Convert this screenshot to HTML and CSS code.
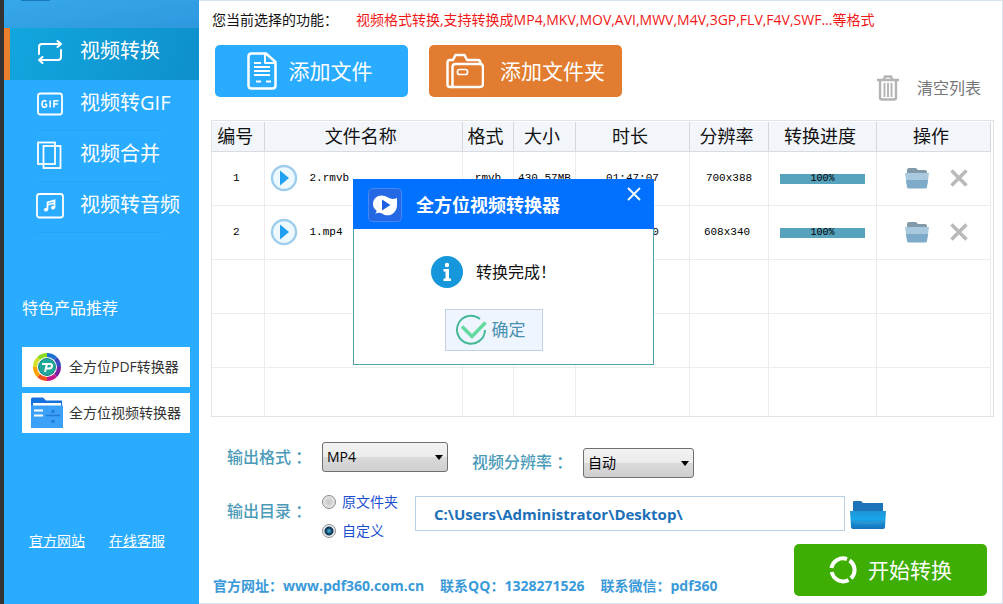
FILE: index.html
```html
<!DOCTYPE html>
<html lang="zh-CN">
<head>
<meta charset="utf-8">
<title>全方位视频转换器</title>
<link rel="stylesheet" href="styles.css">
</head>
<body>
<div class="app">
  <aside class="sidebar">
    <div class="brand"><span class="brand-tab"></span></div>
    <nav class="nav">
      <a class="nav-item active" href="#">
        <svg class="nav-icon" viewBox="0 0 28 28" fill="none" stroke="currentColor" stroke-width="2" stroke-linecap="round" stroke-linejoin="round"><path d="M3 16V9q0-3 3-3h18M21.500 3l3.500 3-3.500 3M25 12v7q0 3-3 3H4M6.500 19L3 22l3.500 3"/></svg>
        <span>视频转换</span></a>
      <a class="nav-item" href="#">
        <svg class="nav-icon" viewBox="0 0 28 28" fill="none" stroke="currentColor" stroke-width="1.800" stroke-linejoin="round"><rect x="2" y="3.500" width="24" height="21" rx="2.500"/><g stroke-width="1.600"><path d="M10.500 11.500q-1.200-1-2.500-.8-2 .4-2 3.300t2 3.300q1.500.2 2.500-.8V14.200H8.700M14.200 10.500v7M18 17.500v-6.800h4.500M18 14h4"/></g></svg>
        <span>视频转GIF</span></a>
      <a class="nav-item" href="#">
        <svg class="nav-icon" viewBox="0 0 28 28" fill="none" stroke="currentColor" stroke-width="1.800"><rect x="2" y="1.500" width="17" height="21.500"/><rect x="7.500" y="5" width="17" height="22"/></svg>
        <span>视频合并</span></a>
      <a class="nav-item" href="#">
        <svg class="nav-icon" viewBox="0 0 28 28" fill="none" stroke="currentColor" stroke-width="1.800"><rect x="1" y="2" width="26" height="23.500" rx="2.500"/><path d="M11.500 17.500v-7l7-2v7M11.500 13l7-2"/><ellipse cx="10" cy="17.700" rx="1.700" ry="1.400" fill="currentColor" stroke-width="1"/><ellipse cx="17" cy="15.700" rx="1.700" ry="1.400" fill="currentColor" stroke-width="1"/></svg>
        <span>视频转音频</span></a>
    </nav>
    <section class="promo">
      <h2>特色产品推荐</h2>
      <a class="promo-card" href="#">
        <svg viewBox="0 0 32 32" width="32" height="32" fill="none" stroke-width="4"><g><path stroke="#1b6fd0" d="M16 4a12 12 0 0 1 8.500 3.500"/><path stroke="#3949c0" d="M24.500 7.500A12 12 0 0 1 28 16"/><path stroke="#7b1fa2" d="M28 16a12 12 0 0 1-3.500 8.500"/><path stroke="#c2188b" d="M24.500 24.500A12 12 0 0 1 16 28"/><path stroke="#f4511e" d="M16 28a12 12 0 0 1-8.500-3.500"/><path stroke="#ffa000" d="M7.500 24.500A12 12 0 0 1 4 16"/><path stroke="#d4e02a" d="M4 16a12 12 0 0 1 3.500-8.500"/><path stroke="#8bdc20" d="M7.500 7.500A12 12 0 0 1 16 4"/></g><circle cx="16" cy="16" r="8.500" fill="#20a79b" stroke="#17857f" stroke-width="1"/><path stroke="#fff" stroke-width="2" d="M11 13h8q2.500 0 2 2.200t-3 2.200h-2M16 13l-2 8"/></svg>
        <span>全方位PDF转换器</span></a>
      <a class="promo-card" href="#">
        <svg viewBox="0 0 32 32" width="32" height="32"><path fill="#1672dc" d="M0 2q0-1.500 1.500-1.500H12l3 3h16V12H0z"/><path fill="#fff" d="M2 6h28v4H2z"/><path fill="#3aa0f8" d="M0 8.500h32V31H0z"/><path stroke="#fff" stroke-width="2" d="M3 13.500h9M3 18.500h9"/><path stroke="#247bd2" stroke-width="1.500" d="M15 18.500h14"/><path fill="#247bd2" d="M20.500 13h3v3h-3zM20.500 23h3v3h-3z"/></svg>
        <span>全方位视频转换器</span></a>
    </section>
    <div class="side-links"><a href="#">官方网站</a><a href="#">在线客服</a></div>
  </aside>

  <main class="main">
    <p class="notice"><span>您当前选择的功能<span class="mid">：</span></span><span class="notice-red">视频格式转换,支持转换成MP4,MKV,MOV,AVI,MWV,M4V,3GP,FLV,F4V,SWF...等格式</span></p>
    <div class="toolbar">
      <button class="btn blue" type="button">
        <svg viewBox="0 0 30 38" width="30" height="38" fill="none" stroke="currentColor" stroke-width="2.500" stroke-linejoin="round"><path d="M19 1.500H4.500q-3 0-3 3v29q0 3 3 3h21q3 0 3-3V10z"/><path stroke-width="1.900" d="M18 2v9h10M7 11h7M7 15h16M7 19h16M7 23h16M9 29.500h5M19 29.500h5"/></svg>
        <span>添加文件</span></button>
      <button class="btn orange" type="button">
        <svg viewBox="0 0 38 36" width="38" height="36" fill="none" stroke="currentColor" stroke-width="2.500" stroke-linejoin="round"><path d="M7 34H4q-2.500 0-2.500-2.500v-22Q1.500 7 4 7h3l2.500-5h9L21 7h11q2.500 0 2.500 4"/><path d="M6.500 34V14q0-3 3-3H34q3 0 3 3v17q0 3-3 3z"/><rect x="11.500" y="16.500" width="10" height="5" rx="2" stroke-width="1.700"/></svg>
        <span>添加文件夹</span></button>
      <button class="clear" type="button">
        <svg viewBox="0 0 22 26" width="22" height="26" fill="none" stroke="currentColor" stroke-width="2.400"><path d="M0 5h22M6.500 5l1.500-3.500h6L15.500 5M3 5.500v17q0 2 2 2h12q2 0 2-2v-17"/><path d="M7.500 8v14M11 8v14M14.500 8v14" stroke-width="1.900"/></svg>
        <span>清空列表</span></button>
    </div>

    <div class="table-box">
      <table class="files">
        <colgroup><col class="c-no"><col class="c-name"><col class="c-fmt"><col class="c-size"><col class="c-time"><col class="c-res"><col class="c-prog"><col class="c-op"></colgroup>
        <thead><tr><th>编号</th><th>文件名称</th><th>格式</th><th>大小</th><th>时长</th><th>分辨率</th><th>转换进度</th><th>操作</th></tr></thead>
        <tbody>
          <tr>
            <td>1</td>
            <td><div class="file"><svg viewBox="0 0 28 28" width="28" height="28"><circle cx="14" cy="14" r="12" fill="#eef8ff" stroke="#9ccdec" stroke-width="2.400"/><path fill="#20a0f0" d="M10 6.500l9 7.500-9 7.500z"/></svg><span>2.rmvb</span></div></td>
            <td>rmvb</td><td>430.57MB</td><td>01:47:07</td><td>700x388</td>
            <td><div class="bar">100%</div></td>
            <td><div class="ops"><button type="button" aria-label="打开文件夹"><svg viewBox="0 0 24 24" width="24" height="24"><path fill="#8299aa" d="M2 4q0-2 2-2h7l2 2h7q2 0 2 2v5H2z"/><path fill="#a8c9de" d="M0 7h24l-1.500 11h-21z"/><path fill="#7eabc9" d="M1 14h22l-1 7q0 1.500-2 1.500H4q-2 0-2-1.500z"/></svg></button><button type="button" aria-label="删除"><svg viewBox="0 0 20 20" width="20" height="20"><path stroke="#b9b9b9" stroke-width="3.500" d="M2.500 2.500l15 15M17.500 2.500l-15 15"/></svg></button></div></td>
          </tr>
          <tr>
            <td>2</td>
            <td><div class="file"><svg viewBox="0 0 28 28" width="28" height="28"><circle cx="14" cy="14" r="12" fill="#eef8ff" stroke="#9ccdec" stroke-width="2.400"/><path fill="#20a0f0" d="M10 6.500l9 7.500-9 7.500z"/></svg><span>1.mp4</span></div></td>
            <td>mp4</td><td>12.30MB</td><td>00:03:20</td><td class="shift">608x340</td>
            <td><div class="bar">100%</div></td>
            <td><div class="ops"><button type="button" aria-label="打开文件夹"><svg viewBox="0 0 24 24" width="24" height="24"><path fill="#8299aa" d="M2 4q0-2 2-2h7l2 2h7q2 0 2 2v5H2z"/><path fill="#a8c9de" d="M0 7h24l-1.500 11h-21z"/><path fill="#7eabc9" d="M1 14h22l-1 7q0 1.500-2 1.500H4q-2 0-2-1.500z"/></svg></button><button type="button" aria-label="删除"><svg viewBox="0 0 20 20" width="20" height="20"><path stroke="#b9b9b9" stroke-width="3.500" d="M2.500 2.500l15 15M17.500 2.500l-15 15"/></svg></button></div></td>
          </tr>
          <tr><td></td><td></td><td></td><td></td><td></td><td></td><td></td><td></td></tr>
          <tr><td></td><td></td><td></td><td></td><td></td><td></td><td></td><td></td></tr>
          <tr class="last"><td></td><td></td><td></td><td></td><td></td><td></td><td></td><td></td></tr>
        </tbody>
      </table>
    </div>

    <div class="row formats">
      <label class="label" for="fmt">输出格式 <span class="mid">：</span></label>
      <span class="select wide"><select id="fmt"><option>MP4</option></select></span>
      <label class="label second" for="res">视频分辨率 <span class="mid">：</span></label>
      <span class="select"><select id="res"><option>自动</option></select></span>
    </div>
    <div class="row output">
      <span class="label">输出目录 <span class="mid">：</span></span>
      <div class="radios">
        <label><input type="radio" name="dir">原文件夹</label>
        <label><input type="radio" name="dir" checked>自定义</label>
      </div>
      <input class="path" type="text" aria-label="输出目录" value="C:\Users\Administrator\Desktop\">
      <button class="browse" type="button" aria-label="浏览">
        <svg viewBox="0 0 36 30" width="36" height="30"><defs><linearGradient id="fold" x1="0" y1="0" x2="0" y2="1"><stop offset="0" stop-color="#1f93d6"/><stop offset=".45" stop-color="#18a6ea"/><stop offset="1" stop-color="#1570b8"/></linearGradient></defs><path fill="#1d74b8" d="M3 1.500L4 1h7l2 2h20v12H3z"/><path fill="url(#fold)" d="M0 11h36l-1 16q0 2-2 2H3q-2 0-2-2z"/><path fill="#3d94cf" d="M1 20q17 4 34 0l-.2 2q-17 4-33.600 0z" opacity=".7"/></svg></button>
    </div>
    <footer class="footer">
      <p><span>官方网址<span class="mid">：</span>www.pdf360.com.cn</span><span>联系QQ<span class="mid">：</span>1328271526</span><span>联系微信<span class="mid">：</span>pdf360</span></p>
      <button class="btn green" type="button">
        <svg viewBox="0 0 28 28" width="28" height="28" fill="none" stroke="currentColor" stroke-width="4"><path d="M2.500 12A11.500 11.500 0 0 1 18 3.200M20.500 4.500A11.500 11.500 0 0 1 22 22.300M19.500 24A11.500 11.500 0 0 1 2.800 16"/></svg>
        <span>开始转换</span></button>
    </footer>
  </main>

  <div class="dialog" role="dialog" aria-label="全方位视频转换器">
    <header>
      <svg viewBox="0 0 34 34" width="34" height="34"><rect x=".5" y=".5" width="33" height="33" rx="4" fill="#2468e4" stroke="#4388f4"/><path fill="#fff" d="M5 16C5 8 14 5 20 9.500q4 2.500 9 .5v7c0 9-9 13-15 8.500q-3-1.500-7 .5 2-2 1.500-3.500Q5 20 5 16z"/><path fill="#1d5fe0" d="M14 11.500l8.500 5.500-8.500 5.500z"/></svg>
      <h1>全方位视频转换器</h1>
      <button type="button" aria-label="关闭"><svg viewBox="0 0 14 14" width="14" height="14"><path stroke="#fff" stroke-width="1.800" d="M1 1l12 12M13 1L1 13"/></svg></button>
    </header>
    <div class="dialog-body">
      <div class="message"><svg viewBox="0 0 32 32" width="32" height="32"><circle cx="16" cy="16" r="16" fill="#1696db"/><circle cx="16" cy="9" r="2.200" fill="#fff"/><path fill="#fff" d="M12.500 13H18v9.500h2V25h-7.500v-2.500h2v-7h-2z"/></svg><span>转换完成<span class="mid">！</span></span></div>
      <button class="ok" type="button"><svg viewBox="0 0 32 32" width="32" height="32" fill="none"><path stroke="#45b995" stroke-width="2" d="M25 5A14 14 0 1 0 30 16"/><path stroke="#63d9a0" stroke-width="3.500" d="M7 12.500l10 10L30.500 8.500"/></svg><span>确定</span></button>
    </div>
  </div>
</div>
</body>
</html>
```
FILE: styles.css
```css
* { box-sizing: border-box; }
body {
  margin: 0;
  font-family: "Open Sans", "Noto Sans CJK SC", sans-serif;
  font-size: 14px;
  line-height: 20px;
  color: #111;
  background: #fff;
}
h1, h2, p { margin: 0; font-weight: 400; }
button { font: inherit; border: 0; padding: 0; background: none; cursor: pointer; }
svg { flex: none; display: block; }
a { color: inherit; }

/* Full-width punctuation centred in its box */
.mid { font-family: "Noto Sans CJK TC", sans-serif; line-height: 1; }

.app { position: relative; display: flex; min-height: 100vh; }

/* Sidebar */
.sidebar {
  flex: none;
  display: flex;
  flex-direction: column;
  width: 199px;
  border-left: 4px solid #333;
  background: #29abff;
  color: #fff;
}
.brand { height: 28px; padding-left: 17px; background: linear-gradient(170deg, #36a8ea, #2e98de); }
.brand-tab { display: block; width: 29px; height: 1px; background: #1878b8; }
.nav { display: flex; flex-direction: column; }
.nav-item {
  display: flex;
  align-items: center;
  gap: 16px;
  height: 51px;
  padding: 0 0 6px 32px;
  font-size: 20px;
  line-height: 28px;
  text-decoration: none;
  white-space: nowrap;
}
.nav-icon { width: 28px; height: 28px; margin-top: 2px; }
.nav-item + .nav-item { background: linear-gradient(#26a4f6, #26a4f6) 32px 100% / 125px 1px no-repeat; }
.nav-item.active {
  height: 52px;
  padding-left: 26px;
  border-left: 6px solid #e87e2e;
  background: linear-gradient(110deg, #12a6de, #0e90cc);
}
.promo { display: flex; flex-direction: column; gap: 6px; padding: 63px 9px 0 18px; }
.promo h2 { margin-bottom: 21px; font-size: 16px; line-height: 24px; }
.promo-card {
  display: flex;
  align-items: center;
  gap: 6px;
  height: 40px;
  padding-left: 9px;
  background: #fff;
  color: #333;
  text-decoration: none;
  white-space: nowrap;
}
.side-links { display: flex; gap: 24px; margin-top: auto; padding: 0 0 53px 25px; }

/* Main panel */
.main {
  flex: 1;
  min-width: 0;
  display: flex;
  flex-direction: column;
  padding: 9px 8px 7px 12px;
  border: 1px solid #d5e4f0;
  border-left: 0;
}
.notice { display: flex; gap: 18px; padding-left: 1px; white-space: nowrap; }
.notice-red { color: #f01818; }
.toolbar { display: flex; align-items: flex-start; gap: 21px; margin-top: 15px; padding: 0 4px; }
.btn {
  display: flex;
  align-items: center;
  justify-content: center;
  gap: 12px;
  width: 193px;
  height: 52px;
  border-radius: 5px;
  color: #fff;
  font-size: 21px;
  white-space: nowrap;
}
.blue { background: #29abff; padding-right: 4px; }
.orange { background: #e27c30; gap: 16px; }
.green { background: #3fae04; gap: 11px; }
.clear { display: flex; align-items: center; gap: 18px; margin: 30px 9px 0 auto; color: #b4b4b4; }
.clear span { color: #777; font-size: 16px; }

.table-box { margin-top: 19px; padding: 1px 2px 0 0; border: 1px solid #e0e3e6; }
.files { width: 100%; border-collapse: collapse; table-layout: fixed; }
.c-no { width: 52px; } .c-fmt { width: 51px; } .c-size { width: 62px; } .c-time { width: 114px; }
.c-res { width: 79px; } .c-prog { width: 108px; } .c-op { width: 114px; }
.files th {
  height: 29px;
  padding: 0 5px 0 0;
  border-right: 1px solid #d4d8dd;
  border-bottom: 1px solid #d8dce0;
  background: #f2f5fa;
  font-size: 18px;
  font-weight: 400;
  line-height: 28px;
  white-space: nowrap;
}
.files td {
  height: 54px;
  padding: 0;
  border-right: 1px solid #ececec;
  border-bottom: 1px solid #ececec;
  font-family: "Liberation Mono", "Noto Sans CJK SC", monospace;
  font-size: 11px;
  text-align: center;
  color: #000;
}
.files td:first-child { padding-right: 3px; }
.files .last td { height: 49px; border-bottom: 0; }
.files td.shift { padding-right: 4px; }
.file { display: flex; align-items: center; gap: 12px; padding-left: 5px; }
.bar { height: 10px; margin: 2px 11px 0; background: #57a2bc; line-height: 10px; font-size: 10px; }
.ops { display: flex; align-items: center; justify-content: center; gap: 20px; padding-left: 6px; }

/* Output settings */
.row { display: flex; white-space: nowrap; }
.label { color: #4b9bb8; font-size: 16px; line-height: 24px; font-weight: 500; }
.formats { align-items: flex-start; margin-top: 25px; padding-left: 16px; }
.formats .label, .output .label { width: 95px; }
.formats .label { margin-top: 3px; }
.formats .second { width: 111px; margin: 8px 0 0 24px; }
.second + .select { margin-top: 6px; }
.select { position: relative; width: 111px; }
.select.wide { width: 126px; }
.select select {
  appearance: none;
  display: block;
  width: 100%;
  height: 30px;
  padding: 0 20px 0 4px;
  border: 1px solid #707070;
  border-radius: 3px;
  background: linear-gradient(#f2f2f2, #ebebeb 50%, #dadada 50%, #cfcfcf);
  font: inherit;
  color: #000;
}
.select::after {
  content: "";
  position: absolute;
  right: 5px;
  top: 13px;
  border: 4px solid transparent;
  border-top: 5px solid #000;
  border-bottom: 0;
  pointer-events: none;
}
.output { align-items: flex-start; margin-top: 14px; padding-left: 16px; }
.output .label { margin-top: 7px; }
.radios { display: flex; flex-direction: column; gap: 9px; width: 93px; color: #1c4fd0; }
.radios label { display: flex; align-items: center; gap: 6px; }
.radios input {
  appearance: none;
  width: 14px;
  height: 14px;
  margin: 0;
  border: 1px solid #8a8a8a;
  border-radius: 50%;
  background: radial-gradient(#c4c4c4, #f4f4f4);
}
.radios input:checked { background: radial-gradient(#3aa0c8 0 1px, #123a58 3px 4px, #f0f0f0 5px); }
.path {
  flex: 1;
  max-width: 430px;
  height: 35px;
  margin-top: 4px;
  padding: 0 18px;
  border: 1px solid #b9cfe4;
  font: 700 15px/20px "Open Sans", sans-serif;
  color: #1c6fb8;
}
.browse { margin: 8px 0 0 5px; }

.footer { display: flex; align-items: flex-end; justify-content: space-between; margin-top: auto; padding: 0 7px 0 2px; }
.footer p { display: flex; gap: 16px; font-size: 14px; font-weight: 700; color: #3a9ad9; white-space: nowrap; }

/* Completion dialog */
.dialog {
  position: absolute;
  left: 353px;
  top: 179px;
  width: 301px;
  border: 1px solid #4fa3ac;
  border-top: 0;
  background: #fff;
}
.dialog header { display: flex; align-items: center; height: 50px; margin: 0 -1px; padding: 2px 13px 0 15px; background: #0271ff; color: #fff; }
.dialog h1 { flex: 1; margin-left: 14px; font-size: 18px; font-weight: 700; }
.dialog header button { margin-bottom: 22px; }
.dialog-body { display: flex; flex-direction: column; align-items: center; gap: 21px; padding: 27px 20px 13px 0; }
.message { display: flex; align-items: center; gap: 13px; font-size: 16px; }
.ok {
  display: flex;
  align-items: center;
  gap: 5px;
  height: 42px;
  padding: 0 16px 0 9px;
  border: 1px solid #c3d0e2;
  background: #eff5ff;
  color: #4890b0;
  font-size: 17px;
}
```
